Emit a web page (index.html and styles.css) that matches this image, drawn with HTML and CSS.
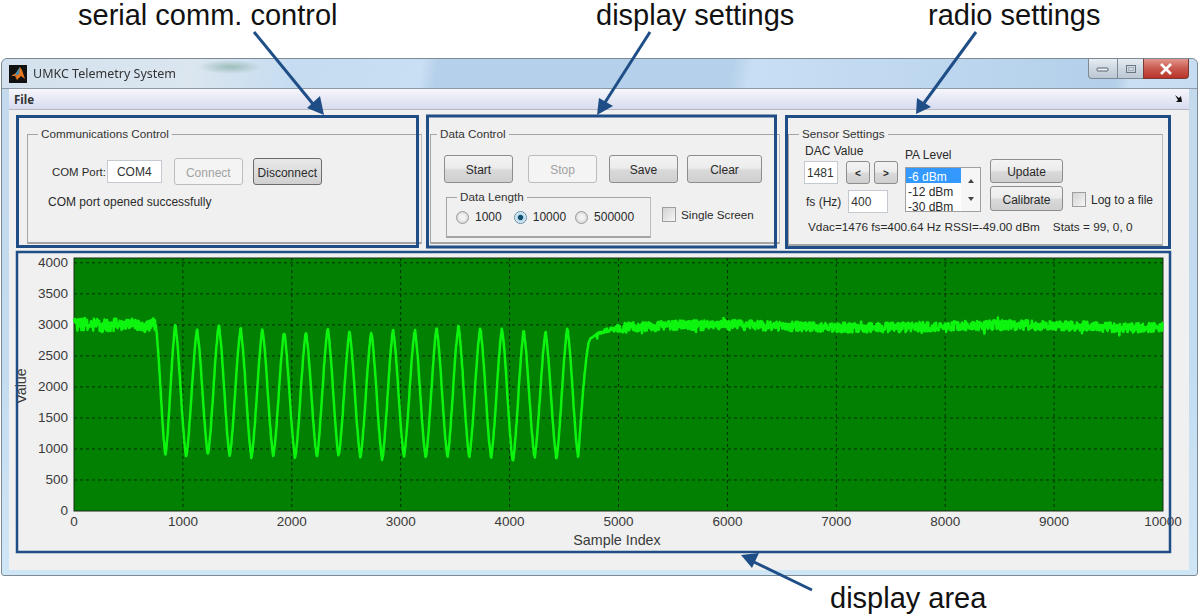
FILE: index.html
```html
<!DOCTYPE html>
<html lang="en">
<head>
  <meta charset="UTF-8">
  <title>UMKC Telemetry System</title>
  <link rel="stylesheet" href="styles.css">
</head>
<body>
  <div class="page">
    <div class="captions">
      <span>serial comm. control</span>
      <span>display settings</span>
      <span>radio settings</span>
    </div>

    <div class="window">
      <div class="titlebar">
        <svg class="app-icon" width="18" height="18" viewBox="0 0 18 18">
          <rect width="18" height="18" fill="#111"/>
          <path d="M2 11 L7 8 L11 2 L13 5 L16 14 L12 11 L8 15 L6 11 Z" fill="#e8761e"/>
          <path d="M7 8 L11 2 L10 9 L6 11 Z" fill="#3d8fb8"/>
        </svg>
        <span class="title">UMKC Telemetry System</span>
        <div class="win-buttons">
          <div class="win-btn win-min"><svg width="14" height="8"><rect x="1" y="3" width="11" height="3" rx="1" fill="#eef2f6" stroke="#59636e"/></svg></div>
          <div class="win-btn win-max"><svg width="12" height="10"><rect x="1.5" y="1.5" width="9" height="7" fill="none" stroke="#6a7580"/><rect x="3.5" y="3.5" width="5" height="3" fill="none" stroke="#aab3bc"/></svg></div>
          <div class="win-btn win-close"><svg width="14" height="12"><path d="M2 1 L12 11 M12 1 L2 11" stroke="#fff" stroke-width="2.6"/></svg></div>
        </div>
      </div>

      <div class="menubar">
        <span class="menu-item">File</span>
        <svg class="menu-arrow" width="8" height="8"><path d="M0 0 L4 3 L6 1 L7 7 L1 7 L3 5 Z" fill="#111"/></svg>
      </div>

      <div class="content">
        <div class="panels">
          <fieldset class="group comm-group">
            <legend>Communications Control</legend>
            <div class="comm-row">
              <label>COM Port:</label>
              <input class="field com-field" type="text" value="COM4">
              <button class="btn btn-tall connect-btn" disabled>Connect</button>
              <button class="btn btn-tall focused">Disconnect</button>
            </div>
            <p class="comm-status">COM port opened successfully</p>
          </fieldset>

          <fieldset class="group data-group">
            <legend>Data Control</legend>
            <div class="data-buttons">
              <button class="btn">Start</button>
              <button class="btn" disabled>Stop</button>
              <button class="btn">Save</button>
              <button class="btn clear-btn">Clear</button>
            </div>
            <div class="data-lower">
              <fieldset class="group length-group">
                <legend>Data Length</legend>
                <div class="radios">
                  <label class="radio r1000"><span class="radio-dot"></span>1000</label>
                  <label class="radio r10000"><span class="radio-dot checked"></span>10000</label>
                  <label class="radio"><span class="radio-dot"></span>500000</label>
                </div>
              </fieldset>
              <label class="check single-check"><span class="check-box"></span>Single Screen</label>
            </div>
          </fieldset>

          <fieldset class="group sensor-group">
            <legend>Sensor Settings</legend>
            <div class="sensor-top">
              <div class="dac-col">
                <div class="dac-label">DAC Value</div>
                <div class="dac-row">
                  <input class="field dac-field" type="text" value="1481">
                  <button class="btn step-btn">&lt;</button>
                  <button class="btn step-btn">&gt;</button>
                </div>
                <div class="fs-row">
                  <label>fs (Hz)</label>
                  <input class="field fs-field" type="text" value="400">
                </div>
              </div>
              <div class="pa-col">
                <div class="pa-label">PA Level</div>
                <div class="listbox">
                  <div class="list-items">
                    <div class="list-item selected">-6 dBm</div>
                    <div class="list-item">-12 dBm</div>
                    <div class="list-item">-30 dBm</div>
                  </div>
                  <div class="list-scroll">
                    <svg width="6" height="4"><path d="M0 4 L3 0 L6 4 Z" fill="#444"/></svg>
                    <svg width="6" height="4"><path d="M0 0 L6 0 L3 4 Z" fill="#444"/></svg>
                  </div>
                </div>
              </div>
              <div class="update-col">
                <button class="btn update-btn">Update</button>
                <button class="btn calibrate-btn">Calibrate</button>
              </div>
              <label class="check log-check"><span class="check-box"></span>Log to a file</label>
            </div>
            <div class="sensor-status">
              <span class="vdac">Vdac=1476 fs=400.64 Hz RSSI=-49.00 dBm</span>
              <span>Stats = 99, 0, 0</span>
            </div>
          </fieldset>
        </div>

        <svg id="plot" class="plot" width="1180" height="318" viewBox="9 250 1180 318"></svg>
      </div>
    </div>

    <div class="caption-bottom">display area</div>

    <!-- call-outs drawn over the screenshot -->
    <svg class="callouts" width="1200" height="615" viewBox="0 0 1200 615">
      <rect x="17.5" y="116.5" width="400" height="130"/>
      <rect x="427.5" y="116" width="348" height="131"/>
      <rect x="786.5" y="116.5" width="383" height="131"/>
      <rect class="thin" x="17" y="252" width="1153" height="300"/>
      <path class="shaft" d="M254 32 L313 104"/>
      <path class="head" d="M324 115 L307 108 L320 96 Z"/>
      <path class="shaft" d="M650 32 L604 104"/>
      <path class="head" d="M597 115 L599 98 L613 106 Z"/>
      <path class="shaft" d="M976 32 L924 103"/>
      <path class="head" d="M916 114 L917 98 L931 107 Z"/>
      <path class="shaft" d="M812 590 L754 562"/>
      <path class="head" d="M741 555 L759 553 L752 568 Z"/>
    </svg>
  </div>

  <script src="plot.js"></script>
</body>
</html>
```

FILE: styles.css
```css
body {
  margin: 0;
  background: #ffffff;
  font-family: "Liberation Sans", Arial, sans-serif;
  font-size: 12px;
  color: #2a2a2a;
}

.page {
  position: relative;
  width: 1200px;
  height: 615px;
  overflow: hidden;
}

.captions {
  display: grid;
  grid-template-columns: 518px 332px auto;
  height: 58px;
  padding-left: 78px;
  font-size: 29px;
  line-height: 30px;
  color: #111;
}

.caption-bottom {
  padding: 7px 0 0 830px;
  font-size: 29px;
  line-height: 30px;
  color: #111;
}

/* window frame */
.window {
  display: flex;
  flex-direction: column;
  box-sizing: border-box;
  width: 1197px;
  height: 518px;
  margin-left: 1px;
  padding: 0 8px 8px 7px;
  border: 1px solid #7d8a94;
  border-radius: 6px 6px 3px 3px;
  background: linear-gradient(180deg, #c4d9ec, #c3dcf0 60%, #cfe6f6);
  filter: blur(0.35px);
}

.titlebar {
  display: flex;
  align-items: flex-start;
  box-sizing: border-box;
  height: 30px;
  flex: none;
  margin: 0 -8px 0 -7px;
  padding: 0 8px 0 7px;
  border-bottom: 1px solid #8e9aa5;
  border-radius: 6px 6px 0 0;
  background:
    radial-gradient(ellipse 32px 7px at 228px 8px, rgba(120, 165, 150, 0.6), transparent),
    linear-gradient(100deg, #d3e1ee 0, #dbe6ef 190px, #c5dcf1 290px, #c9dff3 415px, #b5d0ea 430px, #b5d0ea 720px, #c8def3 740px, #bfd8f0 900px, #b3cfe9 1100px, #cadff2 1115px, #c6dcf0 100%);
}

.app-icon {
  margin: 6px 0 0 0;
}

.title {
  margin: 6px 0 0 6px;
  font-family: "Noto Sans", sans-serif;
  font-size: 12.5px;
  line-height: 18px;
  color: #333;
}

.win-buttons {
  display: flex;
  margin-left: auto;
}

.win-btn {
  display: flex;
  align-items: center;
  justify-content: center;
  box-sizing: border-box;
  height: 20px;
  border: 1px solid #7d8a94;
  border-top: none;
  background: linear-gradient(180deg, #e6ecf2, #ced8e2 50%, #bcc8d4);
}

.win-min {
  width: 29px;
  border-radius: 0 0 0 4px;
  border-right: none;
}

.win-max {
  width: 26px;
  border-right: none;
}

.win-close {
  width: 46px;
  border-radius: 0 0 4px 0;
  border-color: #7a3a36;
  background: linear-gradient(180deg, #e2948a, #c9594e 50%, #b8332a);
}

.menubar {
  display: flex;
  align-items: center;
  justify-content: space-between;
  box-sizing: border-box;
  flex: none;
  height: 21px;
  padding: 0 6px 0 5px;
  border-bottom: 1px solid #b4b8c0;
  background: linear-gradient(180deg, #f6f6fb, #e6e8f5 50%, #d8dcef);
}

.menu-item {
  font-weight: bold;
  font-family: "Noto Sans", sans-serif;
  font-size: 11.5px;
  color: #333;
}

.content {
  flex: 1;
  background: #f0f0f0;
}

.panels {
  display: flex;
  gap: 8px;
  padding: 16px 0 0 18px;
}

/* group boxes */
.group {
  box-sizing: border-box;
  min-width: 0;
  margin: 0;
  padding: 0;
  border: 1px solid #a4a4a4;
  border-bottom-width: 2px;
  border-right-color: #bdbdbd;
}

.group legend {
  margin-left: 10px;
  padding: 0 3px;
  font-size: 11.7px;
  line-height: 16px;
  color: #333;
}

.comm-group {
  width: 395px;
  height: 118px;
}

.data-group {
  width: 350px;
  height: 118px;
}

.data-group > legend {
  margin-left: 6px;
}

.sensor-group {
  width: 375px;
  height: 120px;
}

/* controls */
.btn {
  box-sizing: border-box;
  padding: 2px 0 0;
  border: 1px solid #8d8d8d;
  border-radius: 3px;
  background: linear-gradient(180deg, #f3f3f3, #ececec 45%, #d9d9d9 55%, #cfcfcf);
  font-family: inherit;
  font-size: 12px;
  color: #2a2a2a;
}

.btn:disabled {
  border-color: #bcbcbc;
  background: #f4f4f4;
  color: #a2a2a2;
}

.btn.focused {
  border: 1px solid #6c6c6c;
  background: linear-gradient(180deg, #e8e8e8, #dcdcdc 55%, #d0d0d0);
}

.field {
  box-sizing: border-box;
  padding: 0;
  border: 1px solid #c4c9cf;
  background: #ffffff;
  font-family: inherit;
  font-size: 12px;
  color: #333;
}

.comm-row {
  display: flex;
  align-items: center;
  padding: 16px 0 0 24px;
}

.comm-row label {
  font-size: 11.4px;
}

.com-field {
  width: 55px;
  height: 23px;
  margin-left: 1px;
  text-align: center;
}

.btn-tall {
  width: 69px;
  height: 27px;
  margin-left: 10px;
}

.connect-btn {
  margin-left: 12px;
}

.comm-status {
  margin: 10px 0 0 20px;
  line-height: 14px;
}

.data-buttons {
  display: grid;
  grid-template-columns: 84px 81px 78px 75px;
  padding: 13px 0 0 13px;
}

.data-buttons .btn {
  width: 69px;
  height: 28px;
}

.data-buttons .clear-btn {
  width: 75px;
}

.data-lower {
  display: flex;
  align-items: flex-start;
  margin: 6px 0 0 15px;
}

.length-group {
  width: 205px;
  height: 49px;
}

.radios {
  display: flex;
  padding: 5px 0 0 9px;
}

.radio {
  display: flex;
  align-items: center;
  gap: 6px;
  line-height: 14px;
}

.r1000 {
  margin-right: 12px;
}

.r10000 {
  margin-right: 9px;
}

.radio-dot {
  box-sizing: border-box;
  width: 13px;
  height: 13px;
  border: 1px solid #9a9a9a;
  border-radius: 50%;
  background: radial-gradient(circle, #f2f2f2 30%, #c8c8c8);
}

.radio-dot.checked {
  border-color: #5f8eaa;
  background: radial-gradient(circle, #10506f 28%, #a9cfe4 38%, #e8f2f8 70%);
}

.check {
  display: flex;
  align-items: center;
  gap: 5px;
  line-height: 14px;
}

.check-box {
  box-sizing: border-box;
  width: 14px;
  height: 15px;
  border: 1px solid #9e9e9e;
  background: linear-gradient(135deg, #d2d2d2, #f6f6f6);
}

.single-check {
  margin: 18px 0 0 11px;
  font-size: 11.7px;
}

.sensor-top {
  display: flex;
  align-items: flex-start;
  padding: 2px 0 0 15px;
}

.dac-col {
  width: 101px;
}

.dac-label {
  margin-left: 1px;
  line-height: 14px;
}

.dac-row {
  display: flex;
  align-items: center;
  margin-top: 3px;
}

.dac-field {
  width: 34px;
  height: 23px;
  padding-left: 2px;
}

.step-btn {
  width: 24px;
  height: 23px;
  margin-left: 4px;
  font-size: 10px;
  font-weight: bold;
}

.dac-row .step-btn:first-of-type {
  margin-left: 8px;
}

.fs-row {
  display: flex;
  align-items: center;
  gap: 7px;
  margin: 6px 0 0 2px;
}

.fs-field {
  width: 40px;
  height: 23px;
  padding-left: 2px;
}

.pa-col {
  width: 85px;
  padding-top: 4px;
}

.pa-label {
  line-height: 14px;
}

.listbox {
  display: flex;
  box-sizing: border-box;
  width: 76px;
  height: 45px;
  margin-top: 5px;
  border: 1px solid #a0a0a0;
  background: #ffffff;
  overflow: hidden;
}

.list-items {
  flex: 1;
  font-size: 12px;
  line-height: 12px;
}

.list-item {
  padding: 3px 0 0 2px;
}

.list-item.selected {
  background: #3399ff;
  color: #ffffff;
}

.list-scroll {
  display: flex;
  flex-direction: column;
  align-items: center;
  justify-content: space-between;
  width: 19px;
  padding: 11px 0 10px;
  box-sizing: border-box;
  background: #f6f6f6;
}

.update-col {
  display: flex;
  flex-direction: column;
  gap: 3px;
  width: 82px;
  padding-top: 15px;
}

.update-btn {
  width: 73px;
  height: 24px;
}

.calibrate-btn {
  width: 73px;
  height: 25px;
}

.log-check {
  margin-top: 48px;
}

.sensor-status {
  display: flex;
  gap: 13px;
  margin: 7px 0 0 19px;
  font-size: 11.8px;
  line-height: 14px;
}

.plot {
  display: block;
  margin-top: 6px;
}

.plot text {
  font-family: "Liberation Sans", Arial, sans-serif;
  font-size: 13.5px;
  fill: #3a3a3a;
}

.plot text.axis-label {
  font-size: 14.3px;
}

.callouts {
  position: absolute;
  top: 0;
  left: 0;
  pointer-events: none;
}

.callouts rect {
  fill: none;
  stroke: #1f4e87;
  stroke-width: 3;
}

.callouts rect.thin {
  stroke-width: 2.5;
}

.callouts .shaft {
  fill: none;
  stroke: #1f4e87;
  stroke-width: 3;
}

.callouts .head {
  fill: #1f4e87;
}
```

FILE: plot.js
```js
// draws the telemetry trace, axes and grid into the #plot svg
const NS = 'http://www.w3.org/2000/svg';
const plot = document.getElementById('plot');

const axLeft = 74, axRight = 1163, axTop = 256, axBottom = 509;
const sx = v => axLeft + v * 0.1089;
const sy = v => axBottom - v * 0.06205;

function add(tag, attrs, text) {
  const el = document.createElementNS(NS, tag);
  for (const k in attrs) el.setAttribute(k, attrs[k]);
  if (text !== undefined) el.textContent = text;
  plot.appendChild(el);
  return el;
}

add('rect', { x: axLeft, y: axTop, width: axRight - axLeft, height: axBottom - axTop, fill: '#018001' });

// grid
for (let v = 500; v <= 4000; v += 500) {
  add('line', { x1: axLeft, x2: axRight, y1: sy(v), y2: sy(v), stroke: '#052e05', 'stroke-dasharray': '3 3' });
}
for (let v = 1000; v < 10000; v += 1000) {
  add('line', { x1: sx(v), x2: sx(v), y1: axTop, y2: axBottom, stroke: '#052e05', 'stroke-dasharray': '3 3' });
}

// axes box
add('rect', { x: axLeft, y: axTop, width: axRight - axLeft, height: axBottom - axTop, fill: 'none', stroke: '#1c2c1c' });

// tick labels
for (let v = 0; v <= 4000; v += 500) {
  add('text', { x: 68, y: sy(v) + 4, 'text-anchor': 'end' }, v);
}
for (let v = 0; v <= 10000; v += 1000) {
  add('text', { x: sx(v), y: 524, 'text-anchor': 'middle' }, v);
}
add('text', { class: 'axis-label', x: 617, y: 543, 'text-anchor': 'middle' }, 'Sample Index');
add('text', { class: 'axis-label', x: 26, y: 384, 'text-anchor': 'middle', transform: 'rotate(-90 26 384)' }, 'Value');

// small seeded generator so the noise stays the same on every load
let seed = 4067;
function rnd() {
  seed = (seed * 16807) % 2147483647;
  return seed / 2147483647 - 0.5;
}

const peaks = [3000, 2930, 3000, 2950, 2930, 2890, 2890, 2950, 2890, 2890, 2920, 2924, 2956, 2988, 2956, 2940, 2906, 2890, 2956];
const troughs = [900, 870, 900, 880, 850, 880, 850, 860, 880, 860, 820, 875, 845, 860, 860, 855, 795, 860, 845, 860];

// knots of the burst: x, y pairs, half triangle and half cosine
const knots = [[750, 3000]];
troughs.forEach((t, i) => {
  knots.push([840 + (i === 0 ? 0 : 190 + (i - 1) * 200), t]);
  if (i < peaks.length) knots.push([930 + i * 200, peaks[i]]);
});

function burst(x) {
  for (let i = 0; i < knots.length - 1; i++) {
    const a = knots[i], b = knots[i + 1];
    if (x <= b[0]) {
      const t = (x - a[0]) / (b[0] - a[0]);
      const ease = 0.5 * t + 0.5 * (1 - Math.cos(Math.PI * t)) / 2;
      return a[1] + (b[1] - a[1]) * ease;
    }
  }
  return knots[knots.length - 1][1];
}

// the flat parts have a wide noise band with the odd spike
function flatNoise(range) {
  const spike = rnd() > 0.485 ? 60 : 0;
  return rnd() * range + (rnd() > 0 ? spike : -spike);
}

const last = knots[knots.length - 1];
const pts = [];
for (let x = 0; x <= 10000; x += 4) {
  let v;
  if (x < 750) {
    v = 3000 + 15 * Math.sin(x / 60) + flatNoise(210);
  } else if (x <= last[0]) {
    v = burst(x) + rnd() * 40;
  } else if (x < 4750) {
    const t = (x - last[0]) / (4750 - last[0]);
    v = last[1] + (2800 - last[1]) * Math.sin(t * Math.PI / 2) + rnd() * 40;
  } else {
    const settle = 2975 - 170 * Math.exp(-(x - 4750) / 110);
    v = settle + 22 * Math.sin(x / 420) + flatNoise(Math.min(160, (x - 4750) / 2));
  }
  pts.push(sx(x).toFixed(1) + ',' + sy(v).toFixed(1));
}
add('polyline', { points: pts.join(' '), fill: 'none', stroke: '#0df50f', 'stroke-width': 2.5, 'stroke-linejoin': 'round' });
```
